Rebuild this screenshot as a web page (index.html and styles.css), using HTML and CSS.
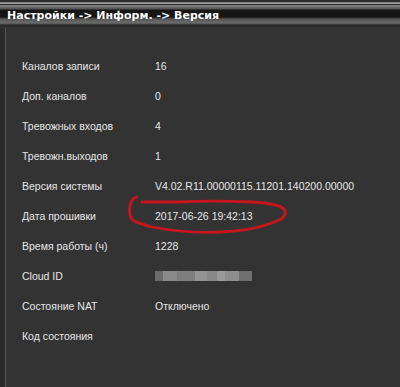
FILE: index.html
```html
<!DOCTYPE html>
<html lang="ru">
<head>
    <meta charset="UTF-8">
    <title>Настройки -> Информ. -> Версия</title>
    <link rel="stylesheet" href="styles.css">
</head>
<body>
    <div class="window">
        <div class="titlebar">
            <span class="title">Настройки -&gt; Информ. -&gt; Версия</span>
        </div>

        <div class="panel">
            <div class="row"><span class="label">Каналов записи</span><span class="value">16</span></div>
            <div class="row"><span class="label">Доп. каналов</span><span class="value">0</span></div>
            <div class="row"><span class="label">Тревожных входов</span><span class="value">4</span></div>
            <div class="row"><span class="label">Тревожн.выходов</span><span class="value">1</span></div>
            <div class="row"><span class="label">Версия системы</span><span class="value">V4.02.R11.00000115.11201.140200.00000</span></div>
            <div class="row"><span class="label">Дата прошивки</span><span class="value">2017-06-26 19:42:13</span></div>
            <div class="row"><span class="label">Время работы (ч)</span><span class="value">1228</span></div>
            <div class="row"><span class="label">Cloud ID</span><span class="value"><span class="blurred"></span></span></div>
            <div class="row"><span class="label">Состояние NAT</span><span class="value">Отключено</span></div>
            <div class="row"><span class="label">Код состояния</span><span class="value"></span></div>
        </div>

        <!-- hand-drawn marker around the firmware date -->
        <svg class="mark" width="400" height="387" viewBox="0 0 400 387">
            <path d="M137 197 C134 198 132 199 131 202 C129 207 129 214 131 218 C134 222 141 224 152 227 C172 231 200 233 222 232 C245 231 266 226 279 220 C285 217 287 213 284 209 C280 205 268 203 252 202 C228 201 200 201 178 202 C162 202 150 202 142 202"
                  fill="none" stroke="#c8151d" stroke-width="2.8" stroke-linecap="round"/>
        </svg>
    </div>
</body>
</html>
```

FILE: styles.css
```css
body {
    margin: 0;
    background: #333333;
    font-family: 'Liberation Sans', Arial, sans-serif;
    color: #e6e6e6;
}
.window {
    position: relative;
    width: 400px;
    height: 387px;
    display: flex;
    flex-direction: column;
    background: #333333;
    overflow: hidden;
}
.titlebar {
    height: 28px;
    padding-left: 7px;
    display: flex;
    align-items: center;
    background: linear-gradient(to bottom,
        #2e2e2e 0px, #2e2e2e 2px,
        #6e6e6e 2px, #9a9a9a 3px, #9a9a9a 4px,
        #2a2a2a 4px, #2a2a2a 5px,
        #8a8a8a 5px, #505050 9px,
        #161616 10px, #161616 17px,
        #555555 19px, #6c6c6c 23px,
        #2a2a2a 25px, #2a2a2a 26px,
        #333333 27px);
}
.title {
    font-family: 'DejaVu Sans', Verdana, sans-serif;
    font-weight: bold;
    font-size: 11px;
    color: #ffffff;
    padding-top: 3px;
}
.panel {
    flex: 1;
    padding: 23px 0 0 17px;
    border-left: 5px solid #2a2a2a;
    box-shadow: inset 1px 0 0 #5a5a5a;
    display: flex;
    flex-direction: column;
}
.row {
    height: 30px;
    display: flex;
    align-items: center;
    font-size: 10.5px;
}
.label {
    width: 133px;
}
.value {
    display: flex;
    align-items: center;
}
.blurred {
    display: block;
    width: 97px;
    height: 10px;
    background: linear-gradient(to right,
        #6a6a6a 0 8px, #8a8a8a 8px 22px, #7e7e7e 22px 40px,
        #939393 40px 52px, #888888 52px 62px, #999999 62px 70px,
        #8c8c8c 70px 84px, #6f6f6f 84px 97px);
}
.mark {
    position: absolute;
    left: 0;
    top: 0;
    pointer-events: none;
}
```
